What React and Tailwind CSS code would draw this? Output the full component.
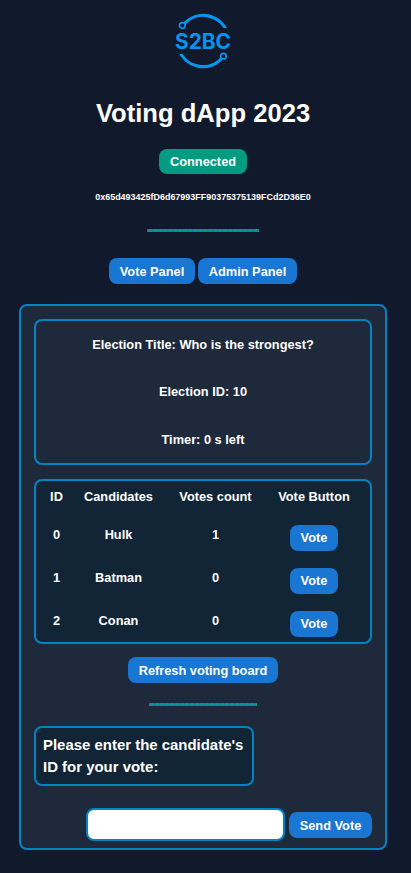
const btn =
  "flex items-center justify-center h-[26px] rounded-[8px] bg-[#1976d2] text-[12.8px] leading-[15px] font-bold text-white whitespace-nowrap";

function Logo() {
  return (
    <svg width="60" height="58" viewBox="0 0 60 58" fill="none" className="block">
      <clipPath id="arcs">
        <path d="M0 0H60V16H0ZM0 42H60V58H0Z" />
      </clipPath>
      <g stroke="#0594f0" strokeWidth="3.2" clipPath="url(#arcs)">
        <path d="M11.2 11.6A25.6 25.6 0 0 1 54 20" />
        <path d="M6 38A25.6 25.6 0 0 0 48.6 46.6" />
      </g>
      <g stroke="#0594f0" strokeWidth="1.7" fill="#11192c">
        <circle cx="9.3" cy="13.5" r="2.8" />
        <circle cx="50.4" cy="44.2" r="2.8" />
      </g>
      <text x="30" y="36.8" textAnchor="middle" fill="#0594f0" className="font-[Inter,sans-serif] text-[20.8px] font-bold">
        S2BC
      </text>
    </svg>
  );
}

function Divider({ className }) {
  const dashes = "h-px bg-[repeating-linear-gradient(90deg,#1769c6_0px,#1769c6_1px,#0d8a98_1px,#0d8a98_2px,#009b80_2px,#009b80_5px)]";
  return (
    <div role="separator" className={`h-[3px] shrink-0 ${className}`}>
      <div className={dashes} />
      <div className="h-px bg-[repeating-linear-gradient(90deg,#1787b4_0px,#1787b4_2px,#009b80_2px,#009b80_5px)]" />
      <div className={dashes} />
    </div>
  );
}

const rows = [
  [0, "Hulk", 1],
  [1, "Batman", 0],
  [2, "Conan", 0],
];

const grid = "grid grid-cols-[41px_83px_111px_86px]";

export default function App() {
  return (
    <div className="h-[873px] w-full bg-[#11192c] pr-[5px] font-['Liberation_Sans',Arial,sans-serif] text-[12.8px] leading-[15px] font-bold text-white">
      <div className="flex flex-col items-center pt-[12px]">
        <Logo />
        <h1 className="mt-[28px] text-[25.6px] leading-[30px] font-bold">Voting dApp 2023</h1>
        <div className="mt-[21px] flex h-[25px] w-[88px] items-center justify-center rounded-[8px] bg-[#009b80]">Connected</div>
        <p className="mt-[18px] text-[8.96px] leading-[10px]">0x65d493425fD6d67993FF90375375139FCd2D36E0</p>
        <Divider className="mt-[27px] w-[112px]" />
        <div className="mt-[26px] flex gap-[3px]">
          <button className={`${btn} w-[86px]`}>Vote Panel</button>
          <button className={`${btn} w-[99px]`}>Admin Panel</button>
        </div>
        <main className="mt-[20px] flex h-[546px] w-[368px] flex-col items-center rounded-[8px] border-2 border-[#0284c0] bg-[#1e293b] px-[13px] pt-[13px]">
          <section className="flex h-[146px] w-full flex-col items-center gap-[32px] rounded-[8px] border-2 border-[#0284c0] pt-[16px]">
            <p>Election Title: Who is the strongest?</p>
            <p>Election ID: 10</p>
            <p className="mt-px">Timer: 0 s left</p>
          </section>
          <section className="mt-[14px] h-[165px] w-full rounded-[8px] border-2 border-[#0284c0] bg-[#112536] text-center">
            <div className={`${grid} h-[35px] pt-[8px]`}>
              <span>ID</span>
              <span>Candidates</span>
              <span>Votes count</span>
              <span>Vote Button</span>
            </div>
            {rows.map(([id, name, votes]) => (
              <div key={id} className={`${grid} h-[43px] pt-[9px]`}>
                <span className="pt-[2px]">{id}</span>
                <span className="pt-[2px]">{name}</span>
                <span className="pt-[2px]">{votes}</span>
                <div className="flex justify-center">
                  <button className={`${btn} w-[48px] pb-[2px]`}>Vote</button>
                </div>
              </div>
            ))}
          </section>
          <button className={`${btn} mt-[13px] w-[150px] shrink-0`}>Refresh voting board</button>
          <Divider className="mt-[20px] w-[108px]" />
          <label className="mt-[20px] h-[60px] w-[220px] shrink-0 self-start rounded-[8px] border-2 border-[#0284c0] bg-[#112536] pt-[6px] pl-[7px] text-[14.95px] leading-[22px]">
            Please enter the candidate's ID for your vote:
          </label>
          <div className="mt-[22px] flex items-center gap-[4px] self-end">
            <input className="h-[33px] w-[199px] rounded-[8px] border-2 border-[#0284c0] bg-white text-black" />
            <button className={`${btn} mt-px w-[83px]`}>Send Vote</button>
          </div>
        </main>
      </div>
    </div>
  );
}
